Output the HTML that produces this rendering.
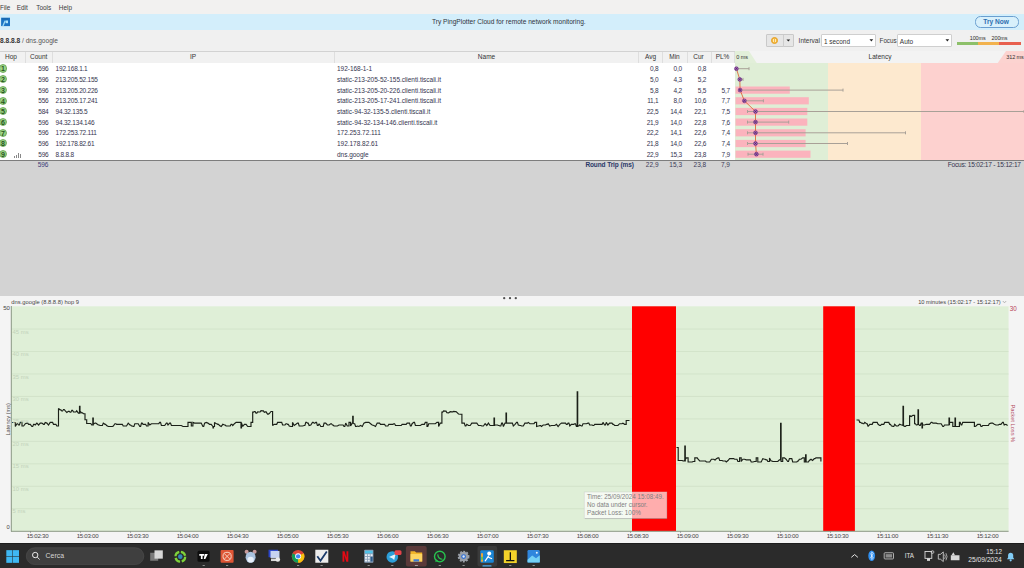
<!DOCTYPE html>
<html><head><meta charset="utf-8">
<style>
*{margin:0;padding:0;box-sizing:border-box}
html,body{width:1024px;height:568px;overflow:hidden;background:#f0f0f0;font-family:"Liberation Sans",sans-serif;color:#333}
.a{position:absolute;white-space:nowrap}
#menu{position:absolute;left:0;top:0;width:1024px;height:14px;background:#f2f1f0}
#menu span{position:absolute;top:4.2px;font-size:6.4px;color:#3a3a3a}
#banner{position:absolute;left:0;top:13.7px;width:1024px;height:16.1px;background:#d3eefb}
#toolbar{position:absolute;left:0;top:30.5px;width:1024px;height:21px;background:#f0f0f0}
#thead{position:absolute;left:0;top:51px;width:1024px;height:12.5px;background:#f1f1f1;border-top:1.6px solid #d2d2d2}
#thead .h{position:absolute;top:1.3px;font-size:6.5px;color:#333;text-align:center}
#thead .d{position:absolute;top:0;width:1px;height:11px;background:#dedede}
#tbody{position:absolute;left:0;top:63.3px;width:1024px;height:96.3px;background:#fff}
.row{position:absolute;left:0;width:1024px;height:10.68px}
.row .c{position:absolute;top:1.9px;font-size:6.5px;color:#35354f;white-space:nowrap;letter-spacing:-0.2px}
.row .r{text-align:right}
.hop{position:absolute;left:-1.2px;top:1.2px;width:8.2px;height:8.2px;border-radius:50%;background:radial-gradient(circle at 45% 40%,#a9dc95,#86c56f);border:0.7px solid #72ad5e;font-size:7px;font-weight:bold;color:#24531c;text-align:center;line-height:7.2px}
.bars{position:absolute;left:14px;top:3px;width:8px;height:6px}
.bars i{position:absolute;bottom:0;width:1.3px;background:#888}
#sum{position:absolute;left:0;top:159.5px;width:1024px;height:1.3px;background:#7d7d7d}
#gray{position:absolute;left:0;top:160.8px;width:1024px;height:135px;background:#d3d3d3}
#lower{position:absolute;left:0;top:295.6px;width:1024px;height:247px;background:#f4f4f4}
#chart{position:absolute;left:0;top:0}
.tl{position:absolute;top:531.5px;width:30px;text-align:center;font-size:6.1px;color:#444;letter-spacing:-0.25px}
.gl{position:absolute;left:12.6px;font-size:5.9px;color:#c2d2ba}
#taskbar{position:absolute;left:0;top:542.5px;width:1024px;height:25.5px;background:#2b2b2b;border-top:1px solid #1d1d1d}
</style></head><body>
<div id="menu">
<span style="left:0px">File</span><span style="left:16.8px">Edit</span><span style="left:36.3px">Tools</span><span style="left:58.8px">Help</span>
</div>
<div id="banner">
 <svg class="a" style="left:0;top:0" width="12" height="16" viewBox="0 13.7 12 16"><rect x="1.1" y="17.4" width="8.9" height="8.4" fill="#1b74c4"/><path d="M5.2 20.4L2.9 25.8" stroke="#9fdcf6" stroke-width="1.3"/><path d="M5.6 20.2H8V22.9H5.6Z" fill="#aee4fa"/><path d="M2 18.6H8.4" stroke="#1a5f9e" stroke-width="0.8"/></svg>
 <div class="a" style="left:432px;top:4.6px;font-size:6.6px;color:#2f3440">Try PingPlotter Cloud for remote network monitoring.</div>
 <div class="a" style="left:975px;top:2.5px;width:43.6px;height:11.4px;border:0.9px solid #6a9fd0;border-radius:5.5px;background:#d8f0fb"></div>
 <div class="a" style="left:983.3px;top:4.1px;font-size:6.6px;font-weight:bold;color:#2e6fb0">Try Now</div>
</div>
<div id="toolbar">
 <div class="a" style="left:0;top:6.6px;font-size:6.6px;color:#333"><b style="font-weight:bold;color:#333">8.8.8.8</b> <span style="color:#555">/ dns.google</span></div>
 <div class="a" style="left:765.7px;top:3.6px;width:28px;height:12.8px;background:#e6e6e6;border:0.7px solid #c9c9c9;border-radius:1px"></div>
 <div class="a" style="left:782.5px;top:4px;width:0.7px;height:12px;background:#cdcdcd"></div>
 <div class="a" style="left:770.6px;top:6.4px;width:7.4px;height:7.4px;border-radius:50%;background:#f5b93e;border:0.6px solid #e3a02a"></div>
 <div class="a" style="left:773.3px;top:8.4px;width:0.8px;height:3.4px;background:#fde9b8"></div>
 <div class="a" style="left:774.9px;top:8.4px;width:0.8px;height:3.4px;background:#fde9b8"></div>
 <svg class="a" style="left:786px;top:8.6px" width="5" height="3"><path d="M0.5 0.5H4.2L2.35 2.6Z" fill="#222"/></svg>
 <div class="a" style="left:798.6px;top:6.0px;font-size:6.5px;color:#3a3a3a">Interval</div>
 <div class="a" style="left:821.3px;top:3.6px;width:54.4px;height:12.8px;background:#fff;border:0.7px solid #cfcfcf;border-radius:1px"></div>
 <div class="a" style="left:824px;top:7.1px;font-size:6.4px;color:#333">1 second</div>
 <svg class="a" style="left:868.8px;top:8.8px" width="5" height="3"><path d="M0.5 0.3H4.2L2.35 2.4Z" fill="#222"/></svg>
 <div class="a" style="left:879.6px;top:6.2px;font-size:6.3px;color:#3a3a3a;letter-spacing:-0.05px">Focus</div>
 <div class="a" style="left:897.4px;top:3.6px;width:54.6px;height:12.8px;background:#fff;border:0.7px solid #cfcfcf;border-radius:1px"></div>
 <div class="a" style="left:899.8px;top:7.1px;font-size:6.5px;color:#333">Auto</div>
 <svg class="a" style="left:945.2px;top:8.8px" width="5" height="3"><path d="M0.5 0.3H4.2L2.35 2.4Z" fill="#222"/></svg>
 <div class="a" style="left:969.8px;top:4.4px;font-size:5.4px;color:#2a2a2a;letter-spacing:-0.1px">100ms</div>
 <div class="a" style="left:991.6px;top:4.4px;font-size:5.4px;color:#2a2a2a;letter-spacing:-0.1px">200ms</div>
 <div class="a" style="left:956.5px;top:11.1px;width:21px;height:3px;background:#8dc06a"></div>
 <div class="a" style="left:977.5px;top:11.1px;width:21.5px;height:3px;background:#f2b24e"></div>
 <div class="a" style="left:999px;top:11.1px;width:21.8px;height:3px;background:#e8604f"></div>
</div>
<div id="thead">
 <div class="h" style="left:0;width:22px">Hop</div>
 <div class="d" style="left:25.2px"></div>
 <div class="h" style="left:25.5px;width:26.5px">Count</div>
 <div class="d" style="left:52px"></div>
 <div class="h" style="left:52px;width:282px">IP</div>
 <div class="d" style="left:334.2px"></div>
 <div class="h" style="left:334.5px;width:304px">Name</div>
 <div class="d" style="left:638.2px"></div>
 <div class="h" style="left:638.5px;width:24px">Avg</div>
 <div class="d" style="left:662.4px"></div>
 <div class="h" style="left:662.5px;width:24px">Min</div>
 <div class="d" style="left:686.6px"></div>
 <div class="h" style="left:686.5px;width:24px">Cur</div>
 <div class="d" style="left:710.5px"></div>
 <div class="h" style="left:710.5px;width:24px">PL%</div>
 <div class="d" style="left:734.3px"></div>
 <div class="a" style="left:735px;top:-1.5px;width:289px;height:12.5px;background:#f3f3f3"></div>
 <svg class="a" style="left:735px;top:-1.5px" width="289" height="13"><path d="M0 0H14L22 12.5H0Z" fill="#e2efd9"/><path d="M262.4 12.5L271 0H289V12.5Z" fill="#fcd3d0"/></svg>
 <div class="a" style="left:736.3px;top:2.4px;font-size:5.5px;color:#333;letter-spacing:-0.1px">0 ms</div>
 <div class="h" style="left:860px;width:40px;top:0.7px">Latency</div>
 <div class="a" style="left:1006.3px;top:2.4px;font-size:5.5px;color:#333;letter-spacing:-0.1px">312 ms</div>
</div>
<div id="tbody">
 <div class="a" style="left:735px;top:0;width:93px;height:96.3px;background:#dfeed6"></div>
 <div class="a" style="left:828px;top:0;width:93px;height:96.3px;background:#fde9cf"></div>
 <div class="a" style="left:921px;top:0;width:103px;height:96.3px;background:#fdd1cf"></div>
</div>
<svg class="a" style="left:0;top:0" width="1024" height="170"><rect x="735.5" y="86.5" width="54.3" height="7.2" fill="#fbb3bd"/>
<rect x="735.5" y="97.2" width="73.3" height="7.2" fill="#fbb3bd"/>
<rect x="735.5" y="107.9" width="71.8" height="7.2" fill="#fbb3bd"/>
<rect x="735.5" y="118.5" width="71.8" height="7.2" fill="#fbb3bd"/>
<rect x="735.5" y="129.2" width="70.1" height="7.2" fill="#fbb3bd"/>
<rect x="735.5" y="139.9" width="70.1" height="7.2" fill="#fbb3bd"/>
<rect x="735.5" y="150.6" width="75.0" height="7.2" fill="#fbb3bd"/>
<line x1="736.4" y1="68.7" x2="749" y2="68.7" stroke="#a8a097" stroke-width="1"/>
<line x1="749" y1="67.2" x2="749" y2="70.2" stroke="#a8a097" stroke-width="1"/>
<line x1="736.4" y1="67.2" x2="736.4" y2="70.2" stroke="#a8a097" stroke-width="1"/>
<line x1="739.5" y1="79.4" x2="743" y2="79.4" stroke="#a8a097" stroke-width="1"/>
<line x1="743" y1="77.9" x2="743" y2="80.9" stroke="#a8a097" stroke-width="1"/>
<line x1="739.5" y1="77.9" x2="739.5" y2="80.9" stroke="#a8a097" stroke-width="1"/>
<line x1="740" y1="90.1" x2="843" y2="90.1" stroke="#a8a097" stroke-width="1"/>
<line x1="843" y1="88.6" x2="843" y2="91.6" stroke="#a8a097" stroke-width="1"/>
<line x1="740" y1="88.6" x2="740" y2="91.6" stroke="#a8a097" stroke-width="1"/>
<line x1="744" y1="100.8" x2="763.4" y2="100.8" stroke="#a8a097" stroke-width="1"/>
<line x1="763.4" y1="99.3" x2="763.4" y2="102.3" stroke="#a8a097" stroke-width="1"/>
<line x1="744" y1="99.3" x2="744" y2="102.3" stroke="#a8a097" stroke-width="1"/>
<line x1="747.5" y1="111.5" x2="1024" y2="111.5" stroke="#a8a097" stroke-width="1"/>
<line x1="1024" y1="110.0" x2="1024" y2="113.0" stroke="#a8a097" stroke-width="1"/>
<line x1="747.5" y1="110.0" x2="747.5" y2="113.0" stroke="#a8a097" stroke-width="1"/>
<line x1="747.5" y1="122.1" x2="788.7" y2="122.1" stroke="#a8a097" stroke-width="1"/>
<line x1="788.7" y1="120.6" x2="788.7" y2="123.6" stroke="#a8a097" stroke-width="1"/>
<line x1="747.5" y1="120.6" x2="747.5" y2="123.6" stroke="#a8a097" stroke-width="1"/>
<line x1="747.5" y1="132.8" x2="905.5" y2="132.8" stroke="#a8a097" stroke-width="1"/>
<line x1="905.5" y1="131.3" x2="905.5" y2="134.3" stroke="#a8a097" stroke-width="1"/>
<line x1="747.5" y1="131.3" x2="747.5" y2="134.3" stroke="#a8a097" stroke-width="1"/>
<line x1="747.5" y1="143.5" x2="847.5" y2="143.5" stroke="#a8a097" stroke-width="1"/>
<line x1="847.5" y1="142.0" x2="847.5" y2="145.0" stroke="#a8a097" stroke-width="1"/>
<line x1="747.5" y1="142.0" x2="747.5" y2="145.0" stroke="#a8a097" stroke-width="1"/>
<line x1="748" y1="154.2" x2="763" y2="154.2" stroke="#a8a097" stroke-width="1"/>
<line x1="763" y1="152.7" x2="763" y2="155.7" stroke="#a8a097" stroke-width="1"/>
<line x1="748" y1="152.7" x2="748" y2="155.7" stroke="#a8a097" stroke-width="1"/>
<polyline points="736.4,68.7 739.8,79.4 740.1,90.1 744.4,100.8 755.5,111.5 755.5,122.1 755.5,132.8 755.5,143.5 756.4,154.2" fill="none" stroke="#dc6a3c" stroke-width="0.9"/>
<circle cx="736.4" cy="68.7" r="1.9" fill="#a466b5" stroke="#6e3584" stroke-width="0.7"/>
<path d="M735.1999999999999 67.5L737.6 69.9M735.1999999999999 69.9L737.6 67.5" stroke="#4a1a5e" stroke-width="0.6"/>
<circle cx="739.8" cy="79.4" r="1.9" fill="#a466b5" stroke="#6e3584" stroke-width="0.7"/>
<path d="M738.5999999999999 78.2L741.0 80.6M738.5999999999999 80.6L741.0 78.2" stroke="#4a1a5e" stroke-width="0.6"/>
<circle cx="740.1" cy="90.1" r="1.9" fill="#a466b5" stroke="#6e3584" stroke-width="0.7"/>
<path d="M738.9 88.9L741.3000000000001 91.3M738.9 91.3L741.3000000000001 88.9" stroke="#4a1a5e" stroke-width="0.6"/>
<circle cx="744.4" cy="100.8" r="1.9" fill="#a466b5" stroke="#6e3584" stroke-width="0.7"/>
<path d="M743.1999999999999 99.6L745.6 102.0M743.1999999999999 102.0L745.6 99.6" stroke="#4a1a5e" stroke-width="0.6"/>
<circle cx="755.5" cy="111.5" r="1.9" fill="#a466b5" stroke="#6e3584" stroke-width="0.7"/>
<path d="M754.3 110.3L756.7 112.7M754.3 112.7L756.7 110.3" stroke="#4a1a5e" stroke-width="0.6"/>
<circle cx="755.5" cy="122.1" r="1.9" fill="#a466b5" stroke="#6e3584" stroke-width="0.7"/>
<path d="M754.3 120.9L756.7 123.3M754.3 123.3L756.7 120.9" stroke="#4a1a5e" stroke-width="0.6"/>
<circle cx="755.5" cy="132.8" r="1.9" fill="#a466b5" stroke="#6e3584" stroke-width="0.7"/>
<path d="M754.3 131.6L756.7 134.0M754.3 134.0L756.7 131.6" stroke="#4a1a5e" stroke-width="0.6"/>
<circle cx="755.5" cy="143.5" r="1.9" fill="#a466b5" stroke="#6e3584" stroke-width="0.7"/>
<path d="M754.3 142.3L756.7 144.7M754.3 144.7L756.7 142.3" stroke="#4a1a5e" stroke-width="0.6"/>
<circle cx="756.4" cy="154.2" r="1.9" fill="#a466b5" stroke="#6e3584" stroke-width="0.7"/>
<path d="M755.1999999999999 153.0L757.6 155.4M755.1999999999999 155.4L757.6 153.0" stroke="#4a1a5e" stroke-width="0.6"/></svg>
<div class="row" style="top:63.30px">
<div class="hop">1</div>
<div class="c r" style="left:25px;width:23.5px">596</div>
<div class="c" style="left:55.6px;letter-spacing:-0.22px">192.168.1.1</div>
<div class="c" style="left:337px;letter-spacing:-0.03px">192-168-1-1</div>
<div class="c r" style="left:638px;width:20.5px">0,8</div>
<div class="c r" style="left:662px;width:20px">0,0</div>
<div class="c r" style="left:686px;width:20.2px">0,8</div>
<div class="c r" style="left:710px;width:20px"></div>
</div>
<div class="row" style="top:73.98px">
<div class="hop">2</div>
<div class="c r" style="left:25px;width:23.5px">596</div>
<div class="c" style="left:55.6px;letter-spacing:-0.22px">213.205.52.155</div>
<div class="c" style="left:337px;letter-spacing:-0.03px">static-213-205-52-155.clienti.tiscali.it</div>
<div class="c r" style="left:638px;width:20.5px">5,0</div>
<div class="c r" style="left:662px;width:20px">4,3</div>
<div class="c r" style="left:686px;width:20.2px">5,2</div>
<div class="c r" style="left:710px;width:20px"></div>
</div>
<div class="row" style="top:84.66px">
<div class="hop">3</div>
<div class="c r" style="left:25px;width:23.5px">596</div>
<div class="c" style="left:55.6px;letter-spacing:-0.22px">213.205.20.226</div>
<div class="c" style="left:337px;letter-spacing:-0.03px">static-213-205-20-226.clienti.tiscali.it</div>
<div class="c r" style="left:638px;width:20.5px">5,8</div>
<div class="c r" style="left:662px;width:20px">4,2</div>
<div class="c r" style="left:686px;width:20.2px">5,5</div>
<div class="c r" style="left:710px;width:20px">5,7</div>
</div>
<div class="row" style="top:95.34px">
<div class="hop">4</div>
<div class="c r" style="left:25px;width:23.5px">556</div>
<div class="c" style="left:55.6px;letter-spacing:-0.22px">213.205.17.241</div>
<div class="c" style="left:337px;letter-spacing:-0.03px">static-213-205-17-241.clienti.tiscali.it</div>
<div class="c r" style="left:638px;width:20.5px">11,1</div>
<div class="c r" style="left:662px;width:20px">8,0</div>
<div class="c r" style="left:686px;width:20.2px">10,6</div>
<div class="c r" style="left:710px;width:20px">7,7</div>
</div>
<div class="row" style="top:106.02px">
<div class="hop">5</div>
<div class="c r" style="left:25px;width:23.5px">584</div>
<div class="c" style="left:55.6px;letter-spacing:-0.22px">94.32.135.5</div>
<div class="c" style="left:337px;letter-spacing:-0.03px">static-94-32-135-5.clienti.tiscali.it</div>
<div class="c r" style="left:638px;width:20.5px">22,5</div>
<div class="c r" style="left:662px;width:20px">14,4</div>
<div class="c r" style="left:686px;width:20.2px">22,1</div>
<div class="c r" style="left:710px;width:20px">7,5</div>
</div>
<div class="row" style="top:116.70px">
<div class="hop">6</div>
<div class="c r" style="left:25px;width:23.5px">596</div>
<div class="c" style="left:55.6px;letter-spacing:-0.22px">94.32.134.146</div>
<div class="c" style="left:337px;letter-spacing:-0.03px">static-94-32-134-146.clienti.tiscali.it</div>
<div class="c r" style="left:638px;width:20.5px">21,9</div>
<div class="c r" style="left:662px;width:20px">14,0</div>
<div class="c r" style="left:686px;width:20.2px">22,8</div>
<div class="c r" style="left:710px;width:20px">7,6</div>
</div>
<div class="row" style="top:127.38px">
<div class="hop">7</div>
<div class="c r" style="left:25px;width:23.5px">596</div>
<div class="c" style="left:55.6px;letter-spacing:-0.22px">172.253.72.111</div>
<div class="c" style="left:337px;letter-spacing:-0.03px">172.253.72.111</div>
<div class="c r" style="left:638px;width:20.5px">22,2</div>
<div class="c r" style="left:662px;width:20px">14,1</div>
<div class="c r" style="left:686px;width:20.2px">22,6</div>
<div class="c r" style="left:710px;width:20px">7,4</div>
</div>
<div class="row" style="top:138.06px">
<div class="hop">8</div>
<div class="c r" style="left:25px;width:23.5px">596</div>
<div class="c" style="left:55.6px;letter-spacing:-0.22px">192.178.82.61</div>
<div class="c" style="left:337px;letter-spacing:-0.03px">192.178.82.61</div>
<div class="c r" style="left:638px;width:20.5px">21,8</div>
<div class="c r" style="left:662px;width:20px">14,0</div>
<div class="c r" style="left:686px;width:20.2px">22,6</div>
<div class="c r" style="left:710px;width:20px">7,4</div>
</div>
<div class="row" style="top:148.74px">
<div class="hop">9</div><div class="bars"><i style="left:0;height:2px"></i><i style="left:2px;height:3px"></i><i style="left:4px;height:5px"></i><i style="left:6px;height:4px"></i></div>
<div class="c r" style="left:25px;width:23.5px">596</div>
<div class="c" style="left:55.6px;letter-spacing:-0.22px">8.8.8.8</div>
<div class="c" style="left:337px;letter-spacing:-0.03px">dns.google</div>
<div class="c r" style="left:638px;width:20.5px">22,9</div>
<div class="c r" style="left:662px;width:20px">15,3</div>
<div class="c r" style="left:686px;width:20.2px">23,8</div>
<div class="c r" style="left:710px;width:20px">7,9</div>
</div>
<div id="sum"></div>
<div id="gray">
 <div class="a" style="left:585.4px;top:0.2px;font-size:6.5px;font-weight:bold;color:#2a3868;letter-spacing:-0.1px">Round Trip (ms)</div>
 <div class="a" style="left:25px;width:23.5px;top:0.3px;font-size:6.5px;color:#3b3b78;text-align:right">596</div>
 <div class="a" style="left:638px;width:20.5px;top:0.3px;font-size:6.5px;color:#3b3b58;text-align:right">22,9</div>
 <div class="a" style="left:662px;width:20px;top:0.3px;font-size:6.5px;color:#3b3b58;text-align:right">15,3</div>
 <div class="a" style="left:686px;width:20.2px;top:0.3px;font-size:6.5px;color:#3b3b58;text-align:right">23,8</div>
 <div class="a" style="left:710px;width:20px;top:0.3px;font-size:6.5px;color:#3b3b58;text-align:right">7,9</div>
 <div class="a" style="left:947.7px;top:0.1px;font-size:6.6px;color:#35354f;letter-spacing:-0.22px">Focus: 15:02:17 - 15:12:17</div>
</div>
<div id="lower">
 <svg class="a" style="left:500px;top:0" width="24" height="5"><circle cx="4.2" cy="2.2" r="1.15" fill="#505050"/><circle cx="10" cy="2.2" r="1.15" fill="#505050"/><circle cx="15.8" cy="2.2" r="1.15" fill="#505050"/></svg>
 <div class="a" style="left:11.3px;top:3.2px;font-size:5.8px;color:#444">dns.google (8.8.8.8) hop 9</div>
 <div class="a" style="left:918.2px;top:3.2px;font-size:5.7px;color:#444">10 minutes (15:02:17 - 15:12:17)</div>
 <svg class="a" style="left:1002px;top:4.5px" width="5" height="4"><path d="M0.8 1L2.5 2.8L4.2 1" stroke="#999" stroke-width="0.7" fill="none"/></svg>
</div>
<svg id="chart" width="1024" height="568">
 <rect x="11.3" y="306.3" width="997.3" height="224.8" fill="#dfefd7"/>
 <g stroke="#cfe0c6" stroke-width="0.8"><line x1="11.5" y1="329.06" x2="1008.5" y2="329.06"/><line x1="11.5" y1="351.52" x2="1008.5" y2="351.52"/><line x1="11.5" y1="373.98" x2="1008.5" y2="373.98"/><line x1="11.5" y1="396.44" x2="1008.5" y2="396.44"/><line x1="11.5" y1="418.90" x2="1008.5" y2="418.90"/><line x1="11.5" y1="441.36" x2="1008.5" y2="441.36"/><line x1="11.5" y1="463.82" x2="1008.5" y2="463.82"/><line x1="11.5" y1="486.28" x2="1008.5" y2="486.28"/><line x1="11.5" y1="508.74" x2="1008.5" y2="508.74"/></g>
 <rect x="632" y="306.3" width="44" height="224.8" fill="#ff0000"/>
 <rect x="823.2" y="306.3" width="31.7" height="224.8" fill="#ff0000"/>
 <path d="M12.0 422.5L13.7 422.5L15.3 422.5L15.3 426.5L17.0 423.7L17.7 423.7L18.6 425.0L19.4 425.0L20.3 422.4L22.0 422.4L22.0 426.0L23.6 426.0L25.3 423.7L26.9 423.1L27.7 423.1L28.6 424.3L30.3 424.3L31.9 426.5L32.7 426.5L33.6 424.3L34.3 424.3L35.2 425.0L36.9 423.1L38.6 425.0L40.2 423.1L41.9 423.1L43.5 424.3L44.3 424.3L45.2 422.4L46.9 423.1L48.5 425.0L50.2 422.4L51.8 422.4L52.6 422.4L53.5 424.3L55.2 424.3L55.9 424.3L56.8 426.0L58.5 426.0L58.5 408.5L60.1 409.8L60.9 409.8L61.8 411.0L62.6 411.0L63.5 409.5L64.2 409.5L65.1 410.7L66.8 412.5L68.4 411.3L69.2 411.3L70.1 412.2L70.9 412.2L71.8 410.3L72.5 410.3L73.4 411.9L75.1 412.0L75.8 412.0L76.7 410.8L78.4 413.1L79.5 413.1L79.5 406.4L80.0 406.4L80.0 413.1L79.2 413.1L80.1 411.2L81.7 412.8L82.5 412.8L83.4 413.7L85.0 413.7L85.0 419.7L86.7 419.7L86.7 423.5L88.4 423.5L90.0 423.5L90.8 423.5L91.7 425.0L92.8 425.0L92.8 418.0L93.3 418.0L93.3 425.0L92.4 425.0L93.3 423.7L94.1 423.7L95.0 423.1L95.8 423.1L96.7 423.7L98.3 425.0L99.1 425.0L100.0 425.5L101.6 425.5L102.4 425.5L103.3 423.1L105.0 424.3L105.7 424.3L106.6 425.5L108.3 426.5L109.9 426.5L111.6 426.5L112.4 426.5L113.3 426.0L114.9 423.7L115.7 423.7L116.6 424.3L118.2 424.3L119.9 424.3L121.6 424.3L122.3 424.3L123.2 426.0L124.9 426.0L126.5 426.0L128.2 423.1L129.9 425.0L130.6 425.0L131.5 426.0L132.3 426.0L133.2 426.5L133.9 426.5L134.8 423.7L136.5 423.7L138.2 423.7L139.8 426.5L140.6 426.5L141.5 423.1L142.2 423.1L143.1 424.3L144.8 424.3L145.6 424.3L146.5 426.0L148.1 426.0L148.1 422.4L149.8 425.0L151.4 423.7L153.1 423.7L154.8 423.7L156.4 423.7L158.1 423.7L158.8 423.7L159.7 422.4L160.5 422.4L161.4 425.5L163.1 425.5L164.7 425.5L166.4 423.1L167.1 423.1L168.0 425.0L169.7 423.1L170.5 423.1L171.4 425.5L173.0 425.5L174.7 425.5L176.3 425.5L178.0 425.5L179.7 425.5L181.3 425.5L183.0 426.5L184.6 426.5L186.3 426.5L188.0 426.5L188.0 422.4L189.6 422.4L191.3 422.4L191.3 426.0L192.9 426.0L192.9 422.4L194.6 423.1L196.3 423.1L197.9 423.1L199.6 423.1L201.2 423.1L202.9 426.5L203.7 426.5L204.6 423.1L206.2 422.4L207.9 423.1L209.5 424.3L211.2 424.3L212.9 426.5L213.0 426.5L213.0 428.0L213.5 428.0L213.5 426.5L214.5 426.5L214.5 422.4L216.2 423.7L216.9 423.7L217.8 424.3L218.6 424.3L219.5 425.5L221.2 426.5L222.8 424.3L224.5 425.0L225.2 425.0L226.1 426.0L227.8 426.0L229.5 426.0L230.2 426.0L231.1 424.3L231.9 424.3L232.8 425.5L234.4 423.7L236.1 422.4L237.8 422.4L239.4 422.4L241.0 422.4L241.0 428.0L241.5 428.0L241.5 422.4L241.1 423.7L241.8 423.7L242.7 426.5L244.4 424.3L246.1 424.3L247.7 426.5L249.4 426.5L251.0 426.5L251.0 422.4L252.7 422.4L252.7 412.1L253.5 412.1L254.4 411.6L255.1 411.6L256.0 413.1L256.8 413.1L257.7 411.8L259.3 412.0L260.1 412.0L261.0 410.7L262.7 410.9L263.4 410.9L264.3 412.4L266.0 411.8L267.6 414.1L268.4 414.1L269.3 413.5L271.0 411.5L272.6 411.5L272.6 425.5L274.3 424.3L275.9 424.3L276.7 424.3L277.6 422.4L279.3 422.4L280.9 422.4L281.7 422.4L282.6 425.0L284.2 425.0L285.0 425.0L285.9 423.7L286.7 423.7L287.6 424.3L288.3 424.3L289.2 426.0L290.9 426.5L292.5 426.5L292.5 422.4L294.2 425.5L295.9 424.3L297.5 423.1L298.3 423.1L299.2 426.0L300.8 426.0L302.5 426.0L304.2 425.5L304.9 425.5L305.8 422.4L306.6 422.4L307.5 423.1L308.2 423.1L309.1 425.5L310.8 425.0L312.5 422.4L313.2 422.4L314.1 423.1L314.9 423.1L315.8 422.4L316.5 422.4L317.4 425.5L318.2 425.5L319.1 423.7L320.8 426.5L322.4 426.5L323.2 426.5L324.1 423.1L325.7 423.1L327.4 425.0L329.1 425.0L330.7 423.7L331.5 423.7L332.4 425.0L333.1 425.0L334.0 426.0L335.7 426.0L337.4 426.0L339.0 425.0L340.7 425.0L342.3 425.0L343.1 425.0L344.0 426.5L344.8 426.5L345.7 423.1L347.3 426.0L349.0 426.0L349.0 422.4L350.6 422.4L350.6 426.0L352.3 423.1L352.7 423.1L352.7 416.3L353.2 416.3L353.2 423.1L353.1 423.1L354.0 423.7L354.7 423.7L355.6 426.5L356.4 426.5L357.3 426.0L358.9 426.5L360.6 425.5L362.3 426.5L363.9 423.1L365.6 422.4L367.2 422.4L368.9 422.4L370.6 423.7L372.2 425.0L373.9 425.5L375.5 426.5L377.2 423.1L378.9 423.1L379.6 423.1L380.5 424.3L382.2 424.3L383.8 424.3L384.6 424.3L385.5 426.0L387.2 426.0L387.9 426.0L388.8 424.3L390.5 424.3L392.1 424.3L392.9 424.3L393.8 423.7L394.6 423.7L395.5 425.5L397.1 425.5L398.8 425.5L400.4 425.5L401.2 425.5L402.1 424.3L403.8 424.3L405.4 424.3L406.2 424.3L407.1 423.1L408.7 423.1L409.5 423.1L410.4 426.0L411.2 426.0L412.1 423.7L413.7 422.4L414.5 422.4L415.4 425.5L417.0 425.5L418.7 425.5L420.4 425.5L422.0 424.3L423.7 424.3L424.4 424.3L425.3 422.4L427.0 422.4L427.0 426.5L427.8 426.5L428.7 423.7L430.3 423.7L432.0 423.7L433.6 423.7L435.3 423.7L437.0 422.4L438.6 422.4L438.6 426.5L440.3 423.1L441.9 423.1L441.9 412.1L442.7 412.1L443.6 410.9L445.3 411.1L446.0 411.1L446.9 412.7L448.6 412.9L450.2 411.7L451.9 411.9L452.7 411.9L453.6 411.4L455.2 411.6L456.0 411.6L456.9 412.4L458.5 414.0L460.2 414.2L461.9 414.2L461.9 423.1L463.5 423.1L464.3 423.1L465.2 426.0L465.9 426.0L466.8 424.3L468.5 425.5L470.2 425.5L471.8 423.1L473.5 423.1L475.1 423.1L476.8 423.1L478.5 425.5L480.1 425.5L480.9 425.5L481.8 426.0L483.4 426.0L485.1 423.7L486.8 425.5L488.4 423.1L490.1 425.5L491.7 425.5L493.4 425.5L494.0 425.5L494.0 418.0L494.5 418.0L494.5 425.5L495.1 425.0L496.7 425.0L497.5 425.0L498.4 425.5L499.1 425.5L500.0 426.0L500.8 426.0L501.7 423.1L502.5 423.1L503.4 426.5L505.0 423.1L506.0 423.1L506.0 413.0L506.5 413.0L506.5 423.1L506.7 423.1L508.3 423.1L510.0 423.1L511.7 423.1L512.4 423.1L513.3 426.0L515.0 424.3L516.6 422.4L517.4 422.4L518.3 425.0L520.0 425.5L520.7 425.5L521.6 426.0L523.3 426.0L524.9 423.1L526.6 423.1L527.4 423.1L528.3 422.4L529.9 423.7L531.6 423.7L533.2 423.7L534.0 423.7L534.9 422.4L536.6 422.4L536.6 426.5L538.2 426.0L539.0 426.0L539.9 425.5L540.6 425.5L541.5 426.5L543.2 425.0L544.9 425.0L545.6 425.0L546.5 424.3L547.3 424.3L548.2 423.7L549.8 426.0L551.5 425.5L553.2 425.5L554.8 425.5L556.5 424.3L558.1 426.5L559.8 424.3L561.5 423.1L563.1 423.1L564.8 423.1L565.5 423.1L566.4 424.3L567.2 424.3L568.1 423.1L568.9 423.1L569.8 426.0L571.4 424.3L573.1 424.3L573.8 424.3L574.7 423.7L575.5 423.7L576.4 426.5L577.2 426.5L577.2 391.7L577.7 391.7L577.7 426.5L577.2 426.5L578.1 426.0L578.8 426.0L579.7 425.0L581.4 426.0L582.1 426.0L583.0 423.7L584.7 423.7L586.4 423.7L588.0 423.1L588.8 423.1L589.7 425.0L591.3 425.0L592.1 425.0L593.0 425.5L593.8 425.5L594.7 424.3L596.3 424.3L598.0 424.3L599.6 424.3L601.3 424.3L602.1 424.3L603.0 422.4L604.6 425.0L605.4 425.0L606.3 422.4L607.9 425.0L609.6 423.1L611.3 423.1L612.0 423.1L612.9 424.3L613.7 424.3L614.6 425.5L616.2 425.5L617.9 425.5L619.6 423.7L621.2 423.7L622.0 423.7L622.9 423.1L624.5 424.3L626.2 424.3L626.2 420.5L627.9 420.5L629.5 420.5M676.5 447.5L678.2 447.5L678.2 460.5L679.8 460.5L681.5 460.5L682.2 460.5L683.1 461.0L684.8 461.0L684.8 446.0L685.3 446.0L685.3 461.0L683.9 461.0L684.8 459.8L686.5 457.9L688.1 457.9L688.1 462.0L689.8 462.0L691.4 462.0L692.2 462.0L693.1 461.5L694.8 461.5L694.8 457.9L696.4 457.9L697.2 457.9L698.1 459.2L699.7 461.0L701.4 461.0L703.1 461.0L704.7 461.0L705.5 461.0L706.4 462.0L708.0 462.0L709.7 462.0L711.4 459.2L713.0 459.2L713.8 459.2L714.7 459.8L715.4 459.8L716.3 458.6L718.0 457.9L718.8 457.9L719.7 460.5L721.3 460.5L722.1 460.5L723.0 461.0L724.6 461.0L725.4 461.0L726.3 462.0L728.0 460.5L729.6 458.6L731.3 458.6L732.9 458.6L733.7 458.6L734.6 459.2L736.3 459.2L737.0 459.2L737.9 461.5L739.6 461.5L739.6 457.9L741.2 457.9L741.2 461.5L742.9 459.2L744.6 459.2L746.2 459.8L747.9 459.8L749.5 459.8L750.3 459.8L751.2 462.0L752.9 462.0L754.5 461.5L756.2 461.5L756.2 457.9L757.8 457.9L757.8 462.0L759.5 462.0L761.2 462.0L762.8 458.6L764.5 459.2L765.2 459.2L766.1 459.8L766.9 459.8L767.8 461.5L769.5 461.5L769.5 457.9L771.1 461.0L771.9 461.0L772.8 461.5L774.4 461.5L776.1 461.5L777.8 461.5L779.4 459.8L780.6 459.8L780.6 423.3L781.1 423.3L781.1 459.8L781.1 461.5L782.7 461.5L782.7 457.9L784.4 457.9L786.1 459.2L787.7 461.5L788.5 461.5L789.4 458.6L791.0 458.6L791.8 458.6L792.7 462.0L794.4 462.0L796.0 462.0L796.8 462.0L797.7 461.0L798.4 461.0L799.3 459.2L801.0 459.2L802.7 457.9L804.3 457.9L804.3 462.0L805.6 462.0L805.6 454.7L806.1 454.7L806.1 462.0L806.0 462.0L807.6 462.0L808.4 462.0L809.3 460.5L811.0 459.2L812.6 460.5L814.3 458.6L815.0 458.6L815.9 457.9L817.6 457.9L819.3 457.9L820.9 457.9L820.9 461.5M856.5 420.0L858.2 420.0L858.9 420.0L859.8 422.4L860.6 422.4L861.5 423.1L862.2 423.1L863.1 423.7L863.9 423.7L864.8 422.4L866.5 423.7L867.2 423.7L868.1 426.5L869.8 424.3L871.4 424.3L872.2 424.3L873.1 422.4L874.8 422.4L876.4 422.4L877.2 422.4L878.1 424.3L879.7 425.5L880.5 425.5L881.4 424.3L883.1 424.3L883.8 424.3L884.7 422.4L886.4 422.4L888.0 422.4L888.8 422.4L889.7 424.3L890.5 424.3L891.4 426.0L892.1 426.0L893.0 426.5L893.8 426.5L894.7 424.3L896.3 426.0L898.0 426.0L899.7 424.3L901.3 425.0L902.1 425.0L903.0 425.5L903.0 425.5L903.0 406.3L903.5 406.3L903.5 425.5L904.6 426.5L905.4 426.5L906.3 425.5L908.0 425.5L909.6 425.5L909.6 415.4L911.3 416.5L912.9 415.4L914.6 415.4L914.6 423.7L915.4 423.7L916.3 425.0L917.0 425.0L917.9 424.3L918.0 424.3L918.0 409.8L918.5 409.8L918.5 424.3L919.6 425.5L920.3 425.5L921.2 423.1L922.0 423.1L922.0 428.0L922.5 428.0L922.5 423.1L922.0 423.1L922.9 425.0L924.6 425.0L926.2 424.3L927.9 424.3L929.5 424.3L931.2 422.4L932.0 422.4L932.9 423.1L934.5 423.1L936.2 423.1L937.8 423.7L939.5 423.7L941.2 423.7L942.8 426.5L943.6 426.5L944.5 425.0L946.1 425.0L947.8 425.0L949.0 425.0L949.0 418.0L949.5 418.0L949.5 425.0L949.5 422.4L951.1 422.4L952.8 422.4L952.8 426.5L954.4 426.5L955.0 426.5L955.0 418.0L955.5 418.0L955.5 426.5L956.1 426.5L957.8 426.5L959.4 426.5L959.4 422.4L960.2 422.4L961.1 425.0L961.8 425.0L962.7 422.4L964.4 422.4L966.1 422.4L967.7 422.4L969.4 422.4L971.0 422.4L972.7 422.4L974.4 422.4L974.4 426.5L975.1 426.5L976.0 426.0L977.7 424.3L979.3 424.3L980.1 424.3L981.0 426.5L981.8 426.5L982.7 425.5L984.3 425.5L986.0 425.5L987.6 425.5L988.4 425.5L989.3 423.7L991.0 423.1L992.6 423.1L994.3 424.3L995.9 425.0L997.6 425.0L998.4 425.0L999.3 424.3L1000.9 424.3L1002.6 422.4L1003.3 422.4L1004.2 425.0L1005.9 424.3L1007.6 425.5" fill="none" stroke="#1b2018" stroke-width="1.15" stroke-linejoin="miter" stroke-miterlimit="2"/>
 <line x1="11.3" y1="306" x2="11.3" y2="531.5" stroke="#8a9884" stroke-width="1"/>
 <line x1="11" y1="531.3" x2="1008.6" y2="531.3" stroke="#8a9884" stroke-width="1"/>
 <g stroke="#888" stroke-width="0.6"><line x1="30.5" y1="531" x2="30.5" y2="533" /><line x1="80.5" y1="531" x2="80.5" y2="533" /><line x1="130.5" y1="531" x2="130.5" y2="533" /><line x1="180.5" y1="531" x2="180.5" y2="533" /><line x1="230.5" y1="531" x2="230.5" y2="533" /><line x1="280.5" y1="531" x2="280.5" y2="533" /><line x1="330.5" y1="531" x2="330.5" y2="533" /><line x1="380.5" y1="531" x2="380.5" y2="533" /><line x1="430.5" y1="531" x2="430.5" y2="533" /><line x1="480.5" y1="531" x2="480.5" y2="533" /><line x1="530.5" y1="531" x2="530.5" y2="533" /><line x1="580.5" y1="531" x2="580.5" y2="533" /><line x1="630.5" y1="531" x2="630.5" y2="533" /><line x1="680.5" y1="531" x2="680.5" y2="533" /><line x1="730.5" y1="531" x2="730.5" y2="533" /><line x1="780.5" y1="531" x2="780.5" y2="533" /><line x1="830.5" y1="531" x2="830.5" y2="533" /><line x1="880.5" y1="531" x2="880.5" y2="533" /><line x1="930.5" y1="531" x2="930.5" y2="533" /><line x1="980.5" y1="531" x2="980.5" y2="533" /></g>
 <rect x="584.2" y="492" width="82.6" height="26.3" fill="rgba(255,255,255,0.68)" stroke="rgba(200,200,200,0.7)" stroke-width="0.6"/><line x1="585" y1="518.6" x2="667" y2="518.6" stroke="rgba(120,120,120,0.35)" stroke-width="0.8"/>
</svg>
<div class="gl" style="top:328.6px">45 ms</div><div class="gl" style="top:351.0px">40 ms</div><div class="gl" style="top:373.5px">35 ms</div><div class="gl" style="top:395.9px">30 ms</div><div class="gl" style="top:418.4px">25 ms</div><div class="gl" style="top:440.9px">20 ms</div><div class="gl" style="top:463.3px">15 ms</div><div class="gl" style="top:485.8px">10 ms</div><div class="gl" style="top:508.2px">5 ms</div>
<div class="a" style="left:3.2px;top:304.2px;font-size:6.1px;color:#444">50</div>
<div class="a" style="left:6.4px;top:524px;font-size:5.8px;color:#444">0</div>
<div class="a" style="left:1009.8px;top:304.6px;font-size:6.3px;color:#b84556">30</div>
<div class="a" style="left:-8px;top:416.5px;width:31px;font-size:5.6px;color:#4a4a4a;transform:rotate(-90deg);text-align:center">Latency (ms)</div>
<div class="a" style="left:993.7px;top:419.8px;width:37px;font-size:5.7px;color:#b24a5e;transform:rotate(90deg);text-align:center">Packet Loss %</div>
<div class="tl" style="left:22.5px">15:02:30</div><div class="tl" style="left:72.5px">15:03:00</div><div class="tl" style="left:122.5px">15:03:30</div><div class="tl" style="left:172.5px">15:04:00</div><div class="tl" style="left:222.5px">15:04:30</div><div class="tl" style="left:272.5px">15:05:00</div><div class="tl" style="left:322.5px">15:05:30</div><div class="tl" style="left:372.5px">15:06:00</div><div class="tl" style="left:422.5px">15:06:30</div><div class="tl" style="left:472.5px">15:07:00</div><div class="tl" style="left:522.5px">15:07:30</div><div class="tl" style="left:572.5px">15:08:00</div><div class="tl" style="left:622.5px">15:08:30</div><div class="tl" style="left:672.5px">15:09:00</div><div class="tl" style="left:722.5px">15:09:30</div><div class="tl" style="left:772.5px">15:10:00</div><div class="tl" style="left:822.5px">15:10:30</div><div class="tl" style="left:872.5px">15:11:00</div><div class="tl" style="left:922.5px">15:11:30</div><div class="tl" style="left:972.5px">15:12:00</div>
<div class="a" style="left:587px;top:493.2px;font-size:6.3px;line-height:7.9px;color:#808080">Time: 25/09/2024 15:08:49.<br>No data under cursor.<br>Packet Loss: 100%</div>
<div id="taskbar">
<svg width="1024" height="26" viewBox="0 543.5 1024 25.5" style="position:absolute;left:0;top:0">
 <g fill="#3fb8f4">
  <rect x="6.3" y="549.4" width="6.1" height="6.1"/><rect x="12.9" y="549.4" width="6.1" height="6.1"/>
  <rect x="6.3" y="556" width="6.1" height="6.1"/><rect x="12.9" y="556" width="6.1" height="6.1"/>
 </g>
 <rect x="26.3" y="547" width="117.5" height="16.8" rx="8.4" fill="#3f3f3f" stroke="#505050" stroke-width="0.6"/>
 <circle cx="35.2" cy="554.3" r="2.7" fill="none" stroke="#e8e8e8" stroke-width="1"/>
 <line x1="37.2" y1="556.3" x2="39.6" y2="558.7" stroke="#e8e8e8" stroke-width="1"/>
 <!-- task view -->
 <rect x="150.2" y="552" width="8" height="8" fill="#7a7a7a"/>
 <rect x="154.5" y="549.6" width="8.3" height="8.3" fill="#d8d8d8"/>
 <!-- green ring -->
 <circle cx="180.3" cy="555.9" r="4.9" fill="none" stroke="#7ed23a" stroke-width="2.2" stroke-dasharray="6 1.7"/>
 <circle cx="180.3" cy="555.9" r="2.3" fill="#2f87b8"/>
 <!-- TV -->
 <rect x="197.5" y="550" width="12" height="11" rx="1.5" fill="#0d0d0d"/>
 <path d="M199.3 553.2H204.2V554.9H202.6V558.3H200.9V554.9H199.3Z" fill="#fff"/>
 <path d="M204.8 553.2H207.8L205.3 558.3H203.8Z" fill="#fff"/>
 <rect x="202.6" y="564.3" width="2.2" height="0.9" fill="#999"/>
 <!-- red x -->
 <rect x="220.6" y="549.2" width="13" height="12.8" rx="1" fill="#df5535"/>
 <circle cx="227.1" cy="555.6" r="4.1" fill="none" stroke="#f7d7c7" stroke-width="1"/>
 <path d="M224.3 552.8L229.9 558.4M229.9 552.8L224.3 558.4" stroke="#f7d7c7" stroke-width="0.9"/>
 <rect x="226" y="564.3" width="2.2" height="0.9" fill="#999"/>
 <!-- mouse -->
 <circle cx="246.6" cy="551.1" r="2" fill="#c79a9a"/><circle cx="254.6" cy="551.1" r="2" fill="#c79a9a"/>
 <ellipse cx="250.6" cy="556.5" rx="5" ry="5.6" fill="#aac3df"/>
 <ellipse cx="250.6" cy="558.9" rx="3.2" ry="2.8" fill="#e8f0fa"/>
 <!-- network pc -->
 <rect x="268.5" y="549" width="9.5" height="7.5" fill="#2b45c8"/>
 <rect x="270.5" y="550.2" width="9" height="7" fill="#c7d3f0"/>
 <rect x="271" y="557.8" width="7" height="2.5" fill="#d8d8d8"/>
 <circle cx="277.8" cy="558.8" r="2.3" fill="#eaeaea"/>
 <!-- chrome -->
 <circle cx="298.1" cy="555.6" r="6.4" fill="#db4437"/>
 <path d="M298.1 555.6L292.6 558.8A6.4 6.4 0 0 0 298.1 562Z" fill="#0f9d58"/>
 <path d="M298.1 555.6L292.5 552.4A6.4 6.4 0 0 0 292.6 558.8L298.1 562Z" fill="#0f9d58"/>
 <path d="M298.1 555.6L303.6 552.4A6.4 6.4 0 0 1 298.1 562Z" fill="#f4c20d"/>
 <circle cx="298.1" cy="555.6" r="3" fill="#fff"/>
 <circle cx="298.1" cy="555.6" r="2.2" fill="#4285f4"/>
 <rect x="297" y="564.3" width="2.2" height="0.9" fill="#999"/>
 <!-- check -->
 <rect x="315.3" y="549" width="13" height="13" fill="#ececec"/>
 <path d="M317.3 555.5L320.5 560L326.8 550.7" stroke="#1a3a6a" stroke-width="1.8" fill="none"/>
 <rect x="320.5" y="564.3" width="2.2" height="0.9" fill="#999"/>
 <!-- netflix -->
 <path d="M342.5 550.5H344.5L346.5 557V550.5H348.3V561H346.3L344.3 554.5V561H342.5Z" fill="#e50914"/>
 <!-- calculator -->
 <rect x="364.2" y="549" width="9.2" height="13" rx="0.8" fill="#8aa0b8"/>
 <rect x="365" y="550" width="7.6" height="2.6" fill="#4fc3e8"/>
 <g fill="#e8eef5"><rect x="365" y="553.5" width="2" height="1.8"/><rect x="367.8" y="553.5" width="2" height="1.8"/><rect x="370.6" y="553.5" width="2" height="1.8"/>
 <rect x="365" y="556.2" width="2" height="1.8"/><rect x="367.8" y="556.2" width="2" height="1.8"/>
 <rect x="365" y="558.9" width="2" height="1.8"/><rect x="367.8" y="558.9" width="2" height="1.8"/></g>
 <rect x="370.6" y="556.2" width="2" height="4.5" fill="#2a5a8a"/>
 <rect x="367.6" y="564.3" width="2.2" height="0.9" fill="#999"/>
 <!-- telegram -->
 <circle cx="392.3" cy="556.2" r="5.8" fill="#2d9fd9"/>
 <path d="M389 556.2L395.6 553.2L394.2 559.3L392.2 557.6Z" fill="#e8f4fb"/>
 <rect x="394.5" y="549.5" width="7" height="4.8" rx="1.5" fill="#e5434a"/>
 <rect x="391.2" y="564.3" width="2.2" height="0.9" fill="#999"/>
 <!-- explorer -->
 <rect x="405.9" y="545.3" width="20.8" height="20.5" rx="2" fill="#5a3a3a"/>
 <path d="M410.5 550.5H414.8L416.2 551.8H422.2V560.8H410.5Z" fill="#f0b429"/>
 <rect x="410.5" y="553.3" width="11.7" height="7.5" fill="#fcd462"/>
 <rect x="413.5" y="558.5" width="5.6" height="2.3" fill="#3d7bd4"/>
 <rect x="414.9" y="564.3" width="3" height="0.9" fill="#aaa"/>
 <!-- whatsapp -->
 <circle cx="439.8" cy="555.8" r="5.3" fill="none" stroke="#27c44f" stroke-width="1.4"/>
 <path d="M435.2 561.4L436.3 558.6L438 560Z" fill="#27c44f"/>
 <path d="M437.7 553.6Q438.3 558.6 442.5 558.5" stroke="#27c44f" stroke-width="1.2" fill="none"/>
 <rect x="438.7" y="564.3" width="2.2" height="0.9" fill="#999"/>
 <!-- gear -->
 <circle cx="463.6" cy="555.8" r="4.8" fill="#9aa0a8" stroke="#9aa0a8" stroke-width="2.2" stroke-dasharray="1.8 1.3"/>
 <circle cx="463.6" cy="555.8" r="2.4" fill="#2f6fd6"/>
 <circle cx="463.6" cy="555.8" r="1.2" fill="#dce8f8"/>
 <rect x="462.5" y="564.3" width="2.2" height="0.9" fill="#999"/>
 <!-- pingplotter -->
 <rect x="477.5" y="545.3" width="19.7" height="20.5" rx="2" fill="#3a3a3a"/>
 <rect x="480.3" y="549.5" width="13.5" height="12.5" rx="1.2" fill="#1b86d6"/>
 <path d="M481 552.5H483V561H481Z" fill="#e8a53a"/><path d="M481 556H483V559H481Z" fill="#6bc04b"/>
 <circle cx="489.2" cy="552.8" r="2" fill="#fff"/>
 <path d="M488.8 554.8L485 560.5M488.5 556.5L492 558" stroke="#fff" stroke-width="1.3"/>
 <rect x="482.4" y="564.6" width="9.2" height="1.2" rx="0.6" fill="#4aa8e8"/>
 <!-- yellow -->
 <rect x="503.8" y="549.5" width="13" height="12.8" fill="#f4d32a"/>
 <path d="M509.7 551.5H511V559.2H514.4V560.5H506.1V559.2H509.7Z" fill="#111"/>
 <rect x="509.2" y="564.3" width="2.2" height="0.9" fill="#999"/>
 <!-- photos -->
 <rect x="527.5" y="549.3" width="12.3" height="12.5" rx="1.2" fill="#2f86dd"/>
 <path d="M527.5 559L532.2 554.8L536 557.5L539.8 554.5V561.8H527.5Z" fill="#73d0f5"/>
 <circle cx="536.8" cy="551.9" r="1" fill="#e6f3ff"/>
 <rect x="532.6" y="564.3" width="2.2" height="0.9" fill="#999"/>
 <!-- tray -->
 <path d="M851.3 556.6L854.6 553.8L857.9 556.6" stroke="#e6e6e6" stroke-width="1" fill="none"/>
 <ellipse cx="871.7" cy="555" rx="3.4" ry="5.3" fill="#2f8ff0"/>
 <path d="M870.3 552.6L873.4 557.4L871.7 558.8V551.2L873.4 552.6L870.3 557.4" stroke="#fff" stroke-width="0.6" fill="none"/>
 <rect x="884.2" y="552" width="9.3" height="6.2" rx="0.8" fill="none" stroke="#bdbdbd" stroke-width="0.9"/>
 <rect x="885.6" y="553.4" width="6.5" height="3.4" fill="#8a8a8a"/>
 <rect x="925" y="550.8" width="6.8" height="6.8" fill="none" stroke="#dadada" stroke-width="0.9"/>
 <rect x="927" y="557.6" width="3" height="2.5" fill="#dadada"/>
 <circle cx="932.5" cy="551.3" r="1.4" fill="none" stroke="#dadada" stroke-width="0.7"/>
 <path d="M938.3 553.6H940.4L943.3 551.2V560.8L940.4 558.4H938.3Z" fill="none" stroke="#dadada" stroke-width="0.8"/>
 <path d="M944.6 553.8Q946 556 944.6 558.2M945.9 552.4Q948.2 556 945.9 559.6" stroke="#dadada" stroke-width="0.7" fill="none"/>
 <path d="M950.8 554.5H959.5V559.5H950.8Z" fill="#dadada"/><path d="M951.5 554.5L953.3 551.5L955 554.5" fill="#dadada"/>
 <path d="M1007 558.5H1014.3L1013.2 556.8V554A2.6 2.6 0 0 0 1008.1 554V556.8Z" fill="#82cdf6"/>
 <circle cx="1010.65" cy="559.6" r="1.1" fill="#82cdf6"/>
</svg>
<div class="a" style="left:45.6px;top:8.3px;font-size:6.9px;color:#d6d6d6">Cerca</div>
<div class="a" style="left:904.7px;top:8.8px;font-size:6.3px;color:#e0e0e0">ITA</div>
<div class="a" style="left:986.3px;top:4.2px;font-size:6.3px;color:#e6e6e6">15:12</div>
<div class="a" style="left:968.3px;top:12.6px;font-size:6.7px;color:#e6e6e6">25/09/2024</div>
</div>
</body></html>
